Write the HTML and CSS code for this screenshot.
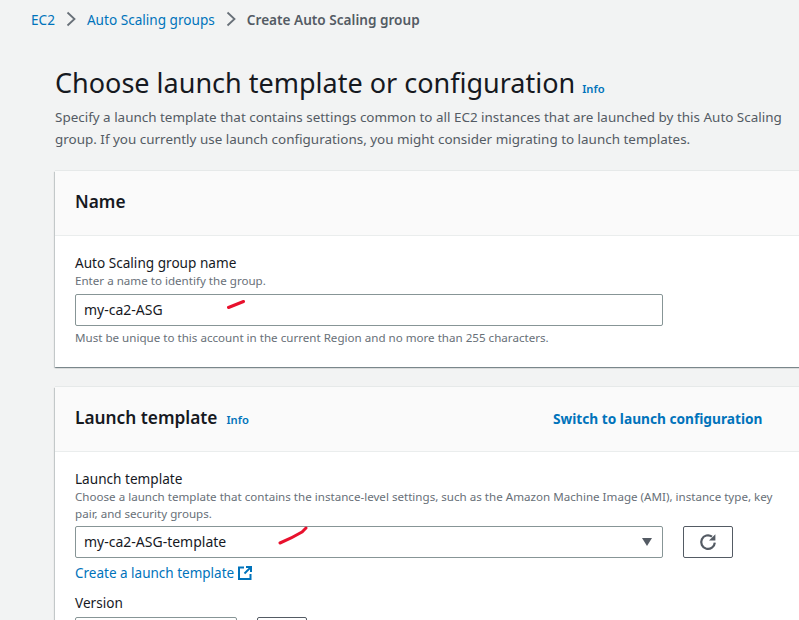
FILE: index.html
```html
<!DOCTYPE html>
<html lang="en">
<head>
    <meta charset="UTF-8">
    <meta name="viewport" content="width=device-width, initial-scale=1.0">
    <title>Create Auto Scaling group</title>
    <link rel="stylesheet" href="styles.css">
</head>
<body>
    <nav class="breadcrumbs">
        <a href="#">EC2</a>
        <svg class="crumb-arrow" viewBox="0 0 10 16"><path d="M1.5 1.5 8.5 8l-7 6.5"/></svg>
        <a href="#">Auto Scaling groups</a>
        <svg class="crumb-arrow" viewBox="0 0 10 16"><path d="M1.5 1.5 8.5 8l-7 6.5"/></svg>
        <span class="crumb-current">Create Auto Scaling group</span>
    </nav>

    <main class="content">
        <h1 class="page-title">Choose launch template or configuration <a class="info" href="#">Info</a></h1>
        <p class="page-desc">Specify a launch template that contains settings common to all EC2 instances that are launched by this Auto Scaling group. If you currently use launch configurations, you might consider migrating to launch templates.</p>

        <section class="card">
            <header class="card-header">
                <h2>Name</h2>
            </header>
            <div class="card-body">
                <div class="field-label">Auto Scaling group name</div>
                <div class="field-hint">Enter a name to identify the group.</div>
                <div class="input-wrap">
                    <div class="input">my-ca2-ASG</div>
                    <svg class="scribble scribble-name" viewBox="0 0 18 9"><path d="M1.5 7.5 16.5 1.5"/></svg>
                </div>
                <div class="field-note">Must be unique to this account in the current Region and no more than 255 characters.</div>
            </div>
        </section>

        <section class="card">
            <header class="card-header">
                <h2>Launch template</h2>
                <a class="info info-card" href="#">Info</a>
                <a class="switch-link" href="#">Switch to launch configuration</a>
            </header>
            <div class="card-body card-body-template">
                <div class="field-label">Launch template</div>
                <div class="field-hint field-hint-wrap">Choose a launch template that contains the instance-level settings, such as the Amazon Machine Image (AMI), instance type, key pair, and security groups.</div>
                <div class="select-row">
                    <div class="input-wrap">
                        <div class="input input-select">my-ca2-ASG-template<span class="caret"></span></div>
                        <svg class="scribble scribble-template" viewBox="0 0 30 19"><path d="M2 17 Q14 12 24 6 L28 2"/></svg>
                    </div>
                    <button class="refresh-btn" type="button">
                        <svg viewBox="0 0 18 18"><path d="M15.8 9.6A6.8 6.8 0 1 1 13 3.6"/><path class="fill" d="M16.4 1.2V7.6H10Z"/></svg>
                    </button>
                </div>
                <a class="create-link" href="#">Create a launch template
                    <svg class="external" viewBox="0 0 14 14"><path d="M6 1.5H1V13H12.5V8"/><path d="M6.5 7.5 12.6 1.4"/><path d="M8 1H13V6"/></svg>
                </a>
                <div class="field-label version-label">Version</div>
                <div class="select-row version-row">
                    <div class="input version-input"></div>
                    <div class="version-btn"></div>
                </div>
            </div>
        </section>
    </main>
</body>
</html>
```

FILE: styles.css
```css
html, body {
    height: 620px;
    overflow: hidden;
}
body {
    font-family: "Noto Sans", "Open Sans", sans-serif;
    margin: 0;
    background-color: #f2f3f3;
    color: #16191f;
    font-size: 14px;
}
a {
    color: #0073bb;
    text-decoration: none;
}

.breadcrumbs {
    display: flex;
    align-items: center;
    height: 20px;
    padding: 9px 0 0 31px;
    font-size: 13.6px;
}
.crumb-arrow {
    width: 10px;
    height: 16px;
    margin: 0 11px;
    fill: none;
    stroke: #687078;
    stroke-width: 1.8;
}
.crumb-current {
    color: #545b64;
    font-weight: 600;
}

.content {
    width: 744px;
    padding: 36px 0 0 55px;
}
.page-title {
    margin: 0;
    font-size: 27px;
    line-height: 36px;
    font-weight: 400;
    white-space: nowrap;
}
.info {
    font-size: 11.2px;
    font-weight: 600;
}
.page-desc {
    width: 740px;
    margin: -1px 0 0;
    color: #545b64;
    font-size: 13.45px;
    line-height: 22px;
}

.card {
    width: 800px;
    margin-top: 20px;
    background: #fff;
    box-shadow: 0 -1px 0 0 #e6e9e9, 0 1px 1px 0 rgba(0, 28, 36, 0.3), 1px 1px 1px 0 rgba(0, 28, 36, 0.15), -1px 1px 1px 0 rgba(0, 28, 36, 0.15);
}
.page-desc + .card {
    margin-top: 21px;
}
.card-header {
    box-sizing: border-box;
    display: flex;
    align-items: center;
    height: 65px;
    padding: 0 0 4px 20px;
    background: #fafafa;
    border-bottom: 1px solid #eaeded;
}
.card-header h2 {
    margin: 0;
    font-size: 17.3px;
    font-weight: 600;
}
.info-card {
    margin: 4px 0 0 9px;
}
.switch-link {
    position: absolute;
    left: 553px;
    margin-top: 2px;
    font-size: 13.7px;
    font-weight: 700;
}
.card-body {
    box-sizing: border-box;
    height: 131px;
    padding: 18px 20px 0;
}
.card-body-template {
    height: 400px;
}

.field-label {
    font-size: 13.6px;
    line-height: 18px;
}
.field-hint, .field-note {
    color: #687078;
    font-size: 11.6px;
    line-height: 17px;
}
.field-hint-wrap {
    width: 700px;
    margin-bottom: -1px;
}
.input-wrap {
    position: relative;
    width: 588px;
    margin-top: 5px;
}
.input {
    box-sizing: border-box;
    height: 32px;
    padding: 0 8px;
    background: #fff;
    border: 1px solid #879596;
    border-radius: 2px;
    font-size: 14px;
    line-height: 30px;
}
.input-select {
    position: relative;
}
.caret {
    position: absolute;
    right: 10px;
    top: 11px;
    border-style: solid;
    border-width: 8px 5.5px 0;
    border-color: #545b64 transparent transparent;
}
.field-note {
    margin-top: 3px;
}
.scribble {
    position: absolute;
    fill: none;
    stroke: #e8112d;
    stroke-linecap: round;
    stroke-width: 3;
}
.scribble-name {
    left: 152px;
    top: 6px;
    width: 18px;
    height: 9px;
}
.scribble-template {
    left: 203px;
    top: 0;
    width: 30px;
    height: 19px;
}

.select-row {
    display: flex;
    gap: 20px;
}
.refresh-btn {
    box-sizing: border-box;
    width: 50px;
    height: 32px;
    margin-top: 5px;
    padding: 0;
    background: #fff;
    border: 1px solid #545b64;
    border-radius: 2px;
}
.refresh-btn svg {
    display: block;
    width: 18px;
    height: 18px;
    margin: 0 auto;
    fill: none;
    stroke: #545b64;
    stroke-width: 2.2;
}
.refresh-btn .fill {
    fill: #545b64;
    stroke: none;
}
.create-link {
    display: flex;
    align-items: center;
    gap: 4px;
    margin-top: 5px;
    font-size: 13.5px;
    line-height: 20px;
}
.external {
    width: 14px;
    height: 14px;
    fill: none;
    stroke: #0073bb;
    stroke-width: 2;
}
.version-label {
    margin-top: 11px;
}
.version-row {
    margin-top: 5px;
}
.version-input {
    width: 162px;
}
.version-btn {
    box-sizing: border-box;
    width: 50px;
    height: 32px;
    border: 1px solid #545b64;
    border-radius: 2px;
}
```
